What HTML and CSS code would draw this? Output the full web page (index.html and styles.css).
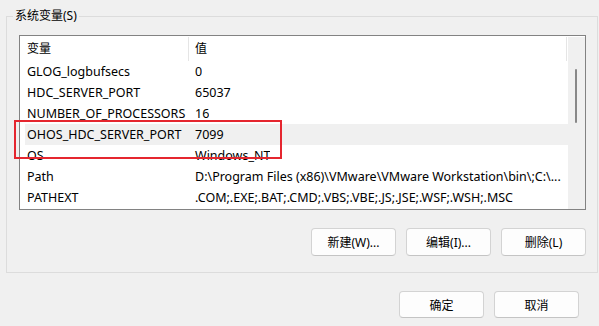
FILE: index.html
```html
<!DOCTYPE html>
<html lang="zh-CN">
<head>
  <meta charset="UTF-8">
  <title>环境变量</title>
  <link rel="stylesheet" href="styles.css">
</head>
<body>
  <fieldset class="group">
    <legend>系统变量(S)</legend>

    <div class="listbox">
      <div class="list">
        <div class="list-header">
          <div class="col-name">变量</div>
          <div class="col-value">值</div>
        </div>
        <div class="row"><div class="col-name">GLOG_logbufsecs</div><div class="col-value">0</div></div>
        <div class="row"><div class="col-name">HDC_SERVER_PORT</div><div class="col-value">65037</div></div>
        <div class="row"><div class="col-name">NUMBER_OF_PROCESSORS</div><div class="col-value">16</div></div>
        <div class="row hover"><div class="col-name">OHOS_HDC_SERVER_PORT</div><div class="col-value">7099</div></div>
        <div class="row"><div class="col-name">OS</div><div class="col-value">Windows_NT</div></div>
        <div class="row"><div class="col-name">Path</div><div class="col-value">D:\Program Files (x86)\VMware\VMware Workstation\bin\;C:\...</div></div>
        <div class="row"><div class="col-name">PATHEXT</div><div class="col-value">.COM;.EXE;.BAT;.CMD;.VBS;.VBE;.JS;.JSE;.WSF;.WSH;.MSC</div></div>
        <div class="highlight"></div>
      </div>
      <div class="scrollbar">
        <div class="thumb"></div>
      </div>
    </div>

    <div class="actions">
      <button class="btn">新建(W)...</button>
      <button class="btn">编辑(I)...</button>
      <button class="btn">删除(L)</button>
    </div>
  </fieldset>

  <div class="footer">
    <button class="btn btn-footer">确定</button>
    <button class="btn btn-footer">取消</button>
  </div>
</body>
</html>
```

FILE: styles.css
```css
body {
  margin: 0;
  background-color: #f0f0f0;
  font-family: "Noto Sans", "Noto Sans CJK SC", sans-serif;
  font-size: 12px;
  color: #000;
  height: 326px;
  overflow: hidden;
}

.group {
  margin: 8px 1px 0 6px;
  padding: 11px 11px 16px 12px;
  border: 1px solid #dcdcdc;
  min-width: 0;
}

.group legend {
  margin-left: -6px;
  padding: 0 2px;
  line-height: 16px;
}

.listbox {
  position: relative;
  display: flex;
  height: 175px;
  box-sizing: border-box;
  padding-top: 1px;
  border: 1px solid #828282;
  background-color: #fff;
}

.list {
  flex: 1;
  padding-left: 5px;
  overflow: hidden;
}

.list-header {
  display: flex;
  height: 24px;
  line-height: 24px;
  margin-right: 1px;
  border-right: 1px solid #e5e5e5;
}

.row {
  display: flex;
  height: 21px;
  line-height: 21px;
  font-size: 12.5px;
  white-space: nowrap;
}

.row.hover {
  background-color: #f0f0f0;
}

.col-name {
  width: 161px;
  padding-left: 2px;
  flex-shrink: 0;
}

.list-header .col-name {
  border-right: 1px solid #e5e5e5;
}

.col-value {
  padding-left: 7px;
  overflow: hidden;
}

.list-header .col-value {
  padding-left: 6px;
}

/* red annotation box drawn over the list */
.highlight {
  position: absolute;
  left: -6px;
  top: 84px;
  width: 264px;
  height: 35px;
  border: 2px solid #e5262f;
  pointer-events: none;
}

.scrollbar {
  width: 17px;
  background-color: #f0f0f0;
}

.thumb {
  width: 2px;
  height: 54px;
  margin: 32px 0 0 7px;
  background-color: #888;
  border-radius: 1px;
}

.actions {
  display: flex;
  justify-content: flex-end;
  gap: 10px;
  margin-top: 18px;
}

.btn {
  width: 85px;
  height: 28px;
  padding: 0;
  background-color: #fdfdfd;
  border: 1px solid #d3d3d3;
  border-bottom-color: #c4c4c4;
  border-radius: 4px;
  font-family: inherit;
  font-size: 12px;
  color: #000;
}

.footer {
  display: flex;
  justify-content: flex-end;
  gap: 10px;
  margin: 18px 20px 0 0;
}

.btn-footer {
  height: 27px;
}
```
